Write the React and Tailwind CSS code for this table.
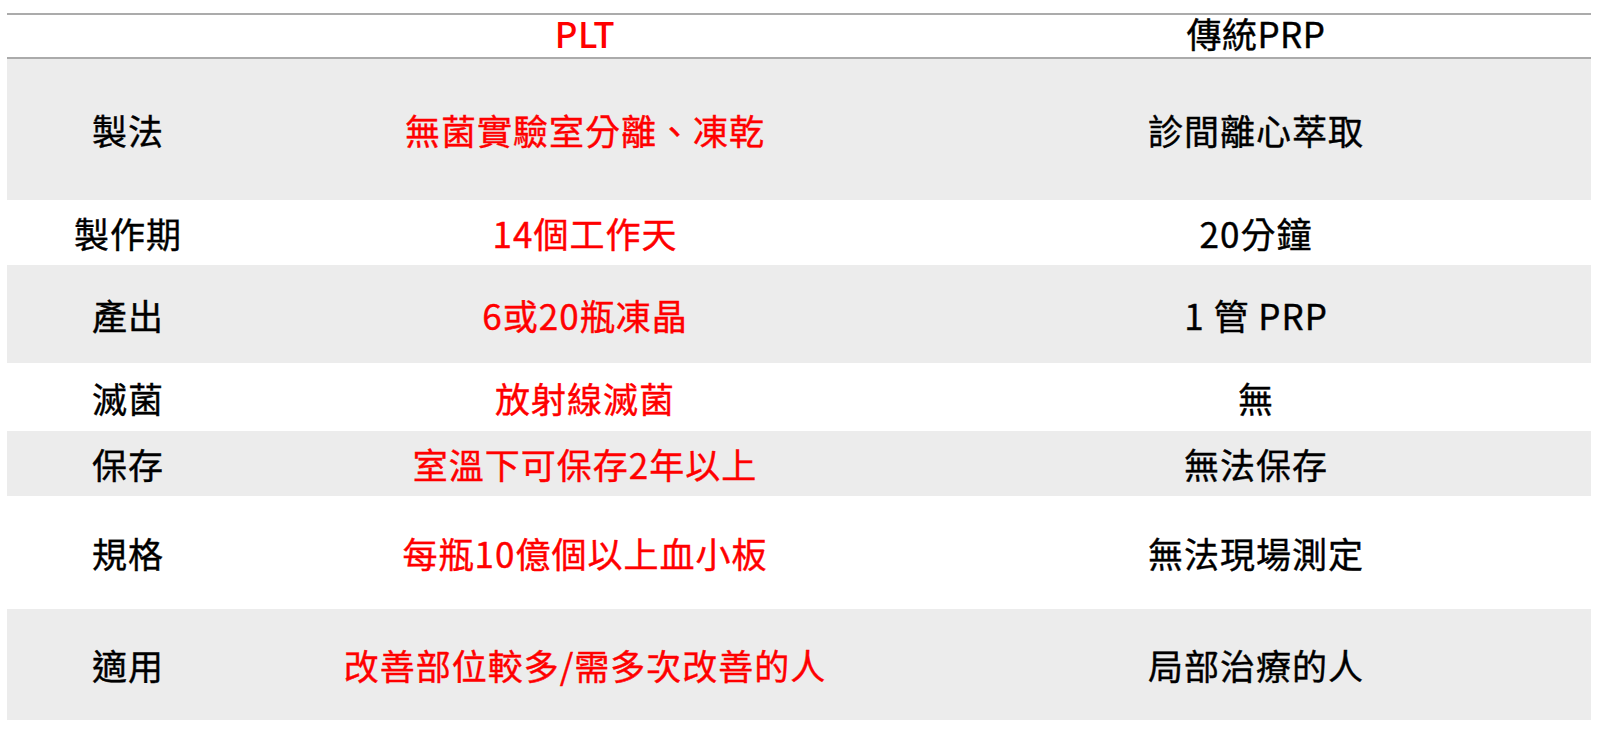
import React from "react";

const rows = [
  { label: "製法", plt: "無菌實驗室分離、凍乾", prp: "診間離心萃取", h: "h-[141px]", gray: true },
  { label: "製作期", plt: "14個工作天", prp: "20分鐘", h: "h-[65px]", gray: false },
  { label: "產出", plt: "6或20瓶凍晶", prp: "1 管 PRP", h: "h-[98px]", gray: true },
  { label: "滅菌", plt: "放射線滅菌", prp: "無", h: "h-[68px]", gray: false },
  { label: "保存", plt: "室溫下可保存2年以上", prp: "無法保存", h: "h-[65px]", gray: true },
  { label: "規格", plt: "每瓶10億個以上血小板", prp: "無法現場測定", h: "h-[113px]", gray: false },
  { label: "適用", plt: "改善部位較多/需多次改善的人", prp: "局部治療的人", h: "h-[111px]", gray: true },
];

export default function App() {
  return (
    <div
      className="min-h-[732px] bg-white pt-[13px] pl-[7px] pr-[9px]"
      style={{ fontFamily: '"Noto Sans CJK TC", "Noto Sans", sans-serif' }}
    >
      <div className="grid grid-cols-[242px_672px_1fr] h-[46px] border-y-2 border-[#ababab] items-center text-[35px] leading-none pb-[10px] tracking-[0.5px]">
        <div />
        <div className="text-center text-[#ff0000] font-medium">PLT</div>
        <div className="text-center text-black [-webkit-text-stroke:0.4px_currentColor]">傳統PRP</div>
      </div>
      {rows.map((r) => (
        <div
          key={r.label}
          className={`grid grid-cols-[242px_672px_1fr] items-center text-[35px] leading-none tracking-[1px] [-webkit-text-stroke:0.4px_currentColor] ${r.h} ${r.gray ? "bg-[#ececec]" : "bg-white"}`}
        >
          <div className="text-center text-black">{r.label}</div>
          <div className="text-center text-[#ff0000]">{r.plt}</div>
          <div className="text-center text-black">{r.prp}</div>
        </div>
      ))}
    </div>
  );
}
